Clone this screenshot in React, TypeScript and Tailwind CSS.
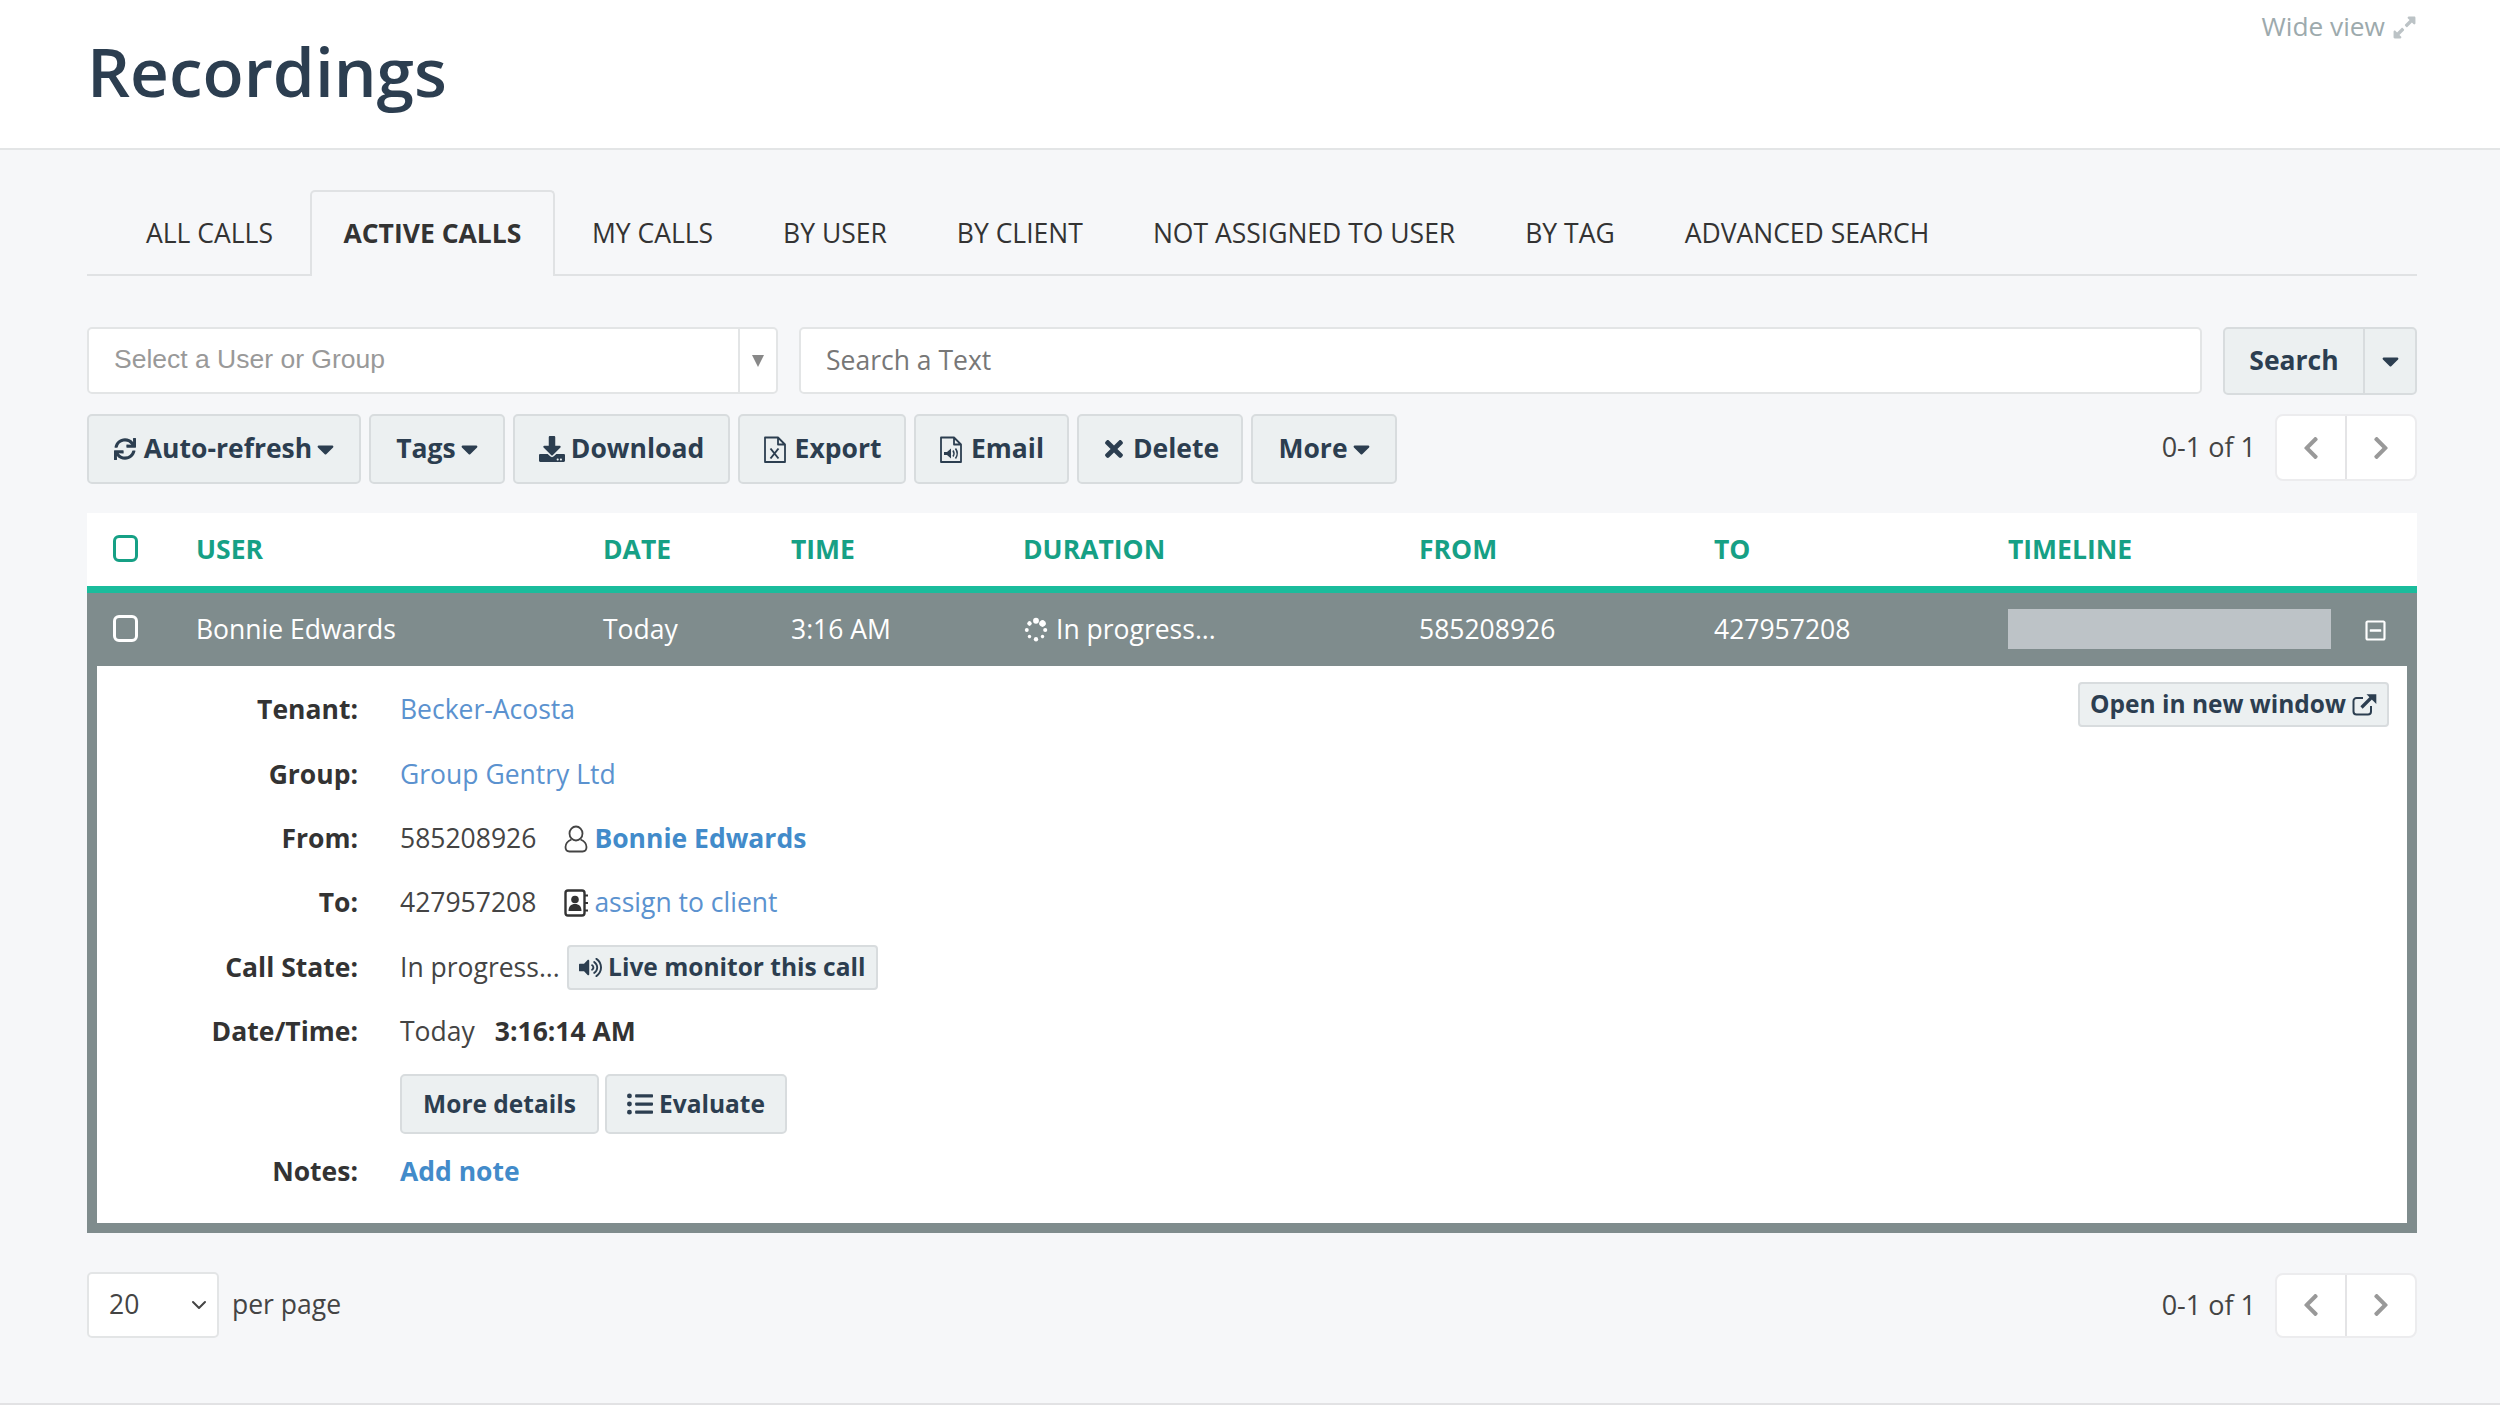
import { FaSync, FaDownload, FaTimes, FaCaretDown, FaChevronLeft, FaChevronRight, FaVolumeUp, FaListUl, FaExpandAlt, FaRegMinusSquare } from 'react-icons/fa';
import { FiChevronDown } from 'react-icons/fi';
import { ReactNode } from 'react';

const tabs = ['ALL CALLS', 'ACTIVE CALLS', 'MY CALLS', 'BY USER', 'BY CLIENT', 'NOT ASSIGNED TO USER', 'BY TAG', 'ADVANCED SEARCH'];
const columns = 'grid grid-cols-[109px_407px_188px_232px_396px_295px_294px_1fr] items-center';
const spinnerDots = [[0, 2.7], [45, 3], [90, 1.9], [135, 1.6], [180, 2], [225, 1.6], [270, 1.8], [315, 2.1]];

function Btn({ children, className = '' }: { children: ReactNode; className?: string }) {
  return (
    <button className={`flex items-center justify-center rounded-[5px] border-2 border-[#d8dcde] bg-[#ecf0f1] font-bold text-[#2c3e50] ${className}`}>
      {children}
    </button>
  );
}

const Caret = ({ className = '' }: { className?: string }) => <FaCaretDown className={`h-[28px] w-[17px] ${className}`} />;

function Pager({ height }: { height: string }) {
  return (
    <div className="flex items-center">
      <span className="mr-[19px] text-[27px] text-[#444]">0-1 of 1</span>
      <div className={`flex w-[142px] rounded-[8px] border-2 border-[#ececee] bg-white text-[26px] text-[#999] ${height}`}>
        <span className="flex flex-1 items-center justify-center border-r-2 border-[#e4e4e6]"><FaChevronLeft /></span>
        <span className="flex flex-1 items-center justify-center"><FaChevronRight /></span>
      </div>
    </div>
  );
}

function Row({ label, children, className = 'h-[64.4px]' }: { label: string; children: ReactNode; className?: string }) {
  return (
    <div className={`flex items-center ${className}`}>
      <div className="w-[261px] text-right font-bold text-[#333]">{label}</div>
      <div className="ml-[42px] flex items-center text-[#444]">{children}</div>
    </div>
  );
}

const Check = ({ className }: { className: string }) => <span className={`mb-[2px] block h-[27px] w-[25px] rounded-[6px] border-[3px] ${className}`} />;

const FileOutline = () => <path d="M2 1.5h13l7 7v17.500H2z M15 1.500v7h7" fill="none" stroke="currentColor" strokeWidth="1.8" strokeLinejoin="round" />;

const ExportIcon = () => (
  <svg viewBox="0 0 24 27" className="h-[27px] w-[24px]">
    <FileOutline />
    <path d="M7.500 12.500l8 10 M15.500 12.500l-8 10" stroke="currentColor" strokeWidth="2" fill="none" />
  </svg>
);

const EmailIcon = () => (
  <svg viewBox="0 0 24 27" className="h-[27px] w-[24px]">
    <FileOutline />
    <path d="M5 16h3l4-3.500v10L8 19H5z" fill="currentColor" />
    <path d="M14 14.500q2 3 0 6 M16.500 12.500q3.500 5 0 10" stroke="currentColor" strokeWidth="1.500" fill="none" />
  </svg>
);

const UserOutline = () => (
  <svg viewBox="0 0 24 28" className="ml-[28px] mr-[6px] h-[28px] w-[24px] text-[#444]" fill="none" stroke="currentColor" strokeWidth="1.800">
    <ellipse cx="12" cy="8.500" rx="6.500" ry="7" />
    <path d="M7.500 14.500C4 16 1.500 18.500 1.500 22c0 3 1.500 4.500 4 4.500h13c2.500 0 4-1.500 4-4.500 0-3.500-2.500-6-6-7.500" />
  </svg>
);

const AddressBook = () => (
  <svg viewBox="0 0 24 28" className="ml-[28px] mr-[6px] h-[28px] w-[24px] text-[#333]">
    <rect x="1.500" y="1.500" width="19" height="25" rx="2.500" fill="none" stroke="currentColor" strokeWidth="2.400" />
    <circle cx="11" cy="10.500" r="3.800" fill="currentColor" />
    <path d="M4.500 22c0-4.500 2.500-7 6.500-7s6.500 2.500 6.500 7z" fill="currentColor" />
    <path d="M21 6.500h3 M21 14h3 M21 21.500h3" stroke="currentColor" strokeWidth="2.200" />
  </svg>
);

const ExternalIcon = () => (
  <svg viewBox="0 0 25 23" className="ml-[6px] h-[23px] w-[25px]" fill="none" stroke="currentColor">
    <path d="M19 13v5.500a3 3 0 0 1-3 3H4.500a3 3 0 0 1-3-3V8a3 3 0 0 1 3-3H11" strokeWidth="2" />
    <path d="M9.500 14.500L21 3" strokeWidth="3.200" />
    <path d="M14.500 1.200h9.800V11z" fill="currentColor" stroke="none" />
  </svg>
);

export default function App() {
  return (
    <div className="min-h-[1405px] border-b-2 border-[#e2e2e4] bg-[#f6f7f9] font-['Open_Sans',sans-serif] text-[26.5px]">
      <header className="flex h-[150px] justify-between border-b-2 border-[#e3e5e6] bg-white pl-[87px] pr-[83px]">
        <h1 className="mt-[26px] text-[67.5px] font-semibold leading-[90px] text-[#2c3e50]">Recordings</h1>
        <div className="mt-[9px] flex h-[36px] items-center gap-[7px] text-[26.3px] text-[#9daaad]">Wide view <FaExpandAlt className="text-[25px] text-[#bcc3c6]" /></div>
      </header>

      <main className="pl-[87px] pr-[83px]">
        <nav className="mt-[40px] flex h-[86px] gap-[4px] border-b-2 border-[#e0e2e4] pl-[26px]">
          {tabs.map((tab) => (
            <div key={tab} className={tab === 'ACTIVE CALLS' ? 'mb-[-2px] flex items-center rounded-t-[5px] border-2 border-b-0 border-[#e0e2e4] bg-[#f6f7f9] px-[31.5px] font-bold text-[#333]' : 'flex items-center px-[33px] pt-[3px] text-[#333]'}>
              {tab}
            </div>
          ))}
        </nav>

        <div className="mt-[51px] flex">
          <div className="flex h-[67px] w-[691px] items-center rounded-[5px] border-2 border-[#e3e5e6] bg-white text-[#999]">
            <span className="flex-1 pb-[2px] pl-[25px] font-['Liberation_Sans',sans-serif] text-[26.5px]">Select a User or Group</span>
            <span className="flex h-full w-[38px] items-center justify-center border-l-2 border-[#e3e5e6]">
              <svg viewBox="0 0 12 12" className="h-[12px] w-[12px]"><path d="M0 0h12L6 12z" fill="#888" /></svg>
            </span>
          </div>
          <div className="ml-[21px] flex h-[67px] flex-1 items-center rounded-[5px] border-2 border-[#e3e5e6] bg-white pl-[25px] text-[#777]">Search a Text</div>
          <div className="ml-[21px] flex h-[68px] w-[194px] rounded-[5px] border-2 border-[#d8dcde] bg-[#ecf0f1] font-bold text-[#2c3e50]">
            <span className="flex w-[140px] items-center justify-center border-r-2 border-[#d8dcde]">Search</span>
            <span className="flex flex-1 items-center justify-center"><Caret /></span>
          </div>
        </div>

        <div className="mt-[19px] flex items-start justify-between">
          <div className="flex gap-[8px] text-[26.5px]">
            <Btn className="h-[70px] w-[274px] gap-[8px]"><FaSync className="text-[22px]" />Auto-refresh<Caret className="ml-[-3px]" /></Btn>
            <Btn className="h-[70px] w-[136px] gap-[5px]">Tags<Caret /></Btn>
            <Btn className="h-[70px] w-[217px] gap-[6px]"><FaDownload className="text-[26px]" />Download</Btn>
            <Btn className="h-[70px] w-[168px] gap-[8px]"><ExportIcon />Export</Btn>
            <Btn className="h-[70px] w-[155px] gap-[8px]"><EmailIcon />Email</Btn>
            <Btn className="h-[70px] w-[166px] gap-[6px]"><FaTimes className="text-[26px]" />Delete</Btn>
            <Btn className="h-[70px] w-[146px] gap-[5px]">More<Caret /></Btn>
          </div>
          <Pager height="h-[67px]" />
        </div>

        <section className="mt-[29px]">
          <div className={`${columns} h-[80px] border-b-[7px] border-[#1abc9c] bg-white font-bold text-[#16a085]`}>
            <span className="pl-[26px]"><Check className="border-[#16a085]" /></span>
            <span>USER</span><span>DATE</span><span>TIME</span><span>DURATION</span><span>FROM</span><span>TO</span><span>TIMELINE</span>
          </div>
          <div className="border-[10px] border-t-0 border-[#7f8c8d]">
            <div className={`${columns} mx-[-10px] h-[73px] bg-[#7f8c8d] text-white`}>
              <span className="pl-[26px]"><Check className="border-white" /></span>
              <span>Bonnie Edwards</span><span>Today</span><span>3:16 AM</span>
              <span className="flex items-center gap-[7px]">
                <svg viewBox="0 0 24 24" className="h-[26px] w-[26px]" fill="white">
                  {spinnerDots.map(([a, r]) => <circle key={a} cx="12" cy="3.500" r={r} transform={`rotate(${a} 12 12)`} />)}
                </svg>
                In progress...
              </span>
              <span>585208926</span><span>427957208</span>
              <span className="flex items-center">
                <span className="mb-[2px] h-[40px] w-[323px] bg-[#bdc3c7]" />
                <FaRegMinusSquare className="ml-[33px] mt-[1px] text-[23px] text-white" />
              </span>
            </div>
            <div className="flex justify-between bg-white pb-[19px] pt-[12px]">
              <div>
                <Row label="Tenant:"><a className="text-[#5b92cf]">Becker-Acosta</a></Row>
                <Row label="Group:"><a className="text-[#5b92cf]">Group Gentry Ltd</a></Row>
                <Row label="From:">585208926<UserOutline /><a className="font-bold text-[#428bca]">Bonnie Edwards</a></Row>
                <Row label="To:">427957208<AddressBook /><a className="text-[#5b92cf]">assign to client</a></Row>
                <Row label="Call State:">
                  In progress...
                  <Btn className="ml-[7px] h-[45px] w-[311px] gap-[6px] !rounded-[4px] text-[24.5px]"><FaVolumeUp className="text-[23px]" />Live monitor this call</Btn>
                </Row>
                <Row label="Date/Time:">Today<b className="ml-[20px] font-bold text-[#333]">3:16:14 AM</b></Row>
                <Row label="" className="mt-[10px] h-[60px]">
                  <Btn className="h-[60px] w-[199px] text-[24.5px]">More details</Btn>
                  <Btn className="ml-[6px] h-[60px] w-[182px] gap-[6px] text-[24.5px]"><FaListUl className="text-[26px]" />Evaluate</Btn>
                </Row>
                <Row label="Notes:" className="mt-[6px] h-[64px]"><a className="font-bold text-[#428bca]">Add note</a></Row>
              </div>
              <Btn className="mr-[18px] mt-[4px] h-[45px] w-[311px] !rounded-[4px] text-[24.5px]">Open in new window<ExternalIcon /></Btn>
            </div>
          </div>
        </section>

        <div className="mt-[39px] flex items-center justify-between">
          <div className="flex items-center">
            <div className="flex h-[66px] w-[132px] items-center justify-between rounded-[5px] border-2 border-[#e3e5e6] bg-white pl-[20px] pr-[6px] text-[#444]">20<FiChevronDown className="text-[24px]" /></div>
            <span className="ml-[13px] text-[#444]">per page</span>
          </div>
          <Pager height="h-[65px]" />
        </div>
      </main>
    </div>
  );
}
